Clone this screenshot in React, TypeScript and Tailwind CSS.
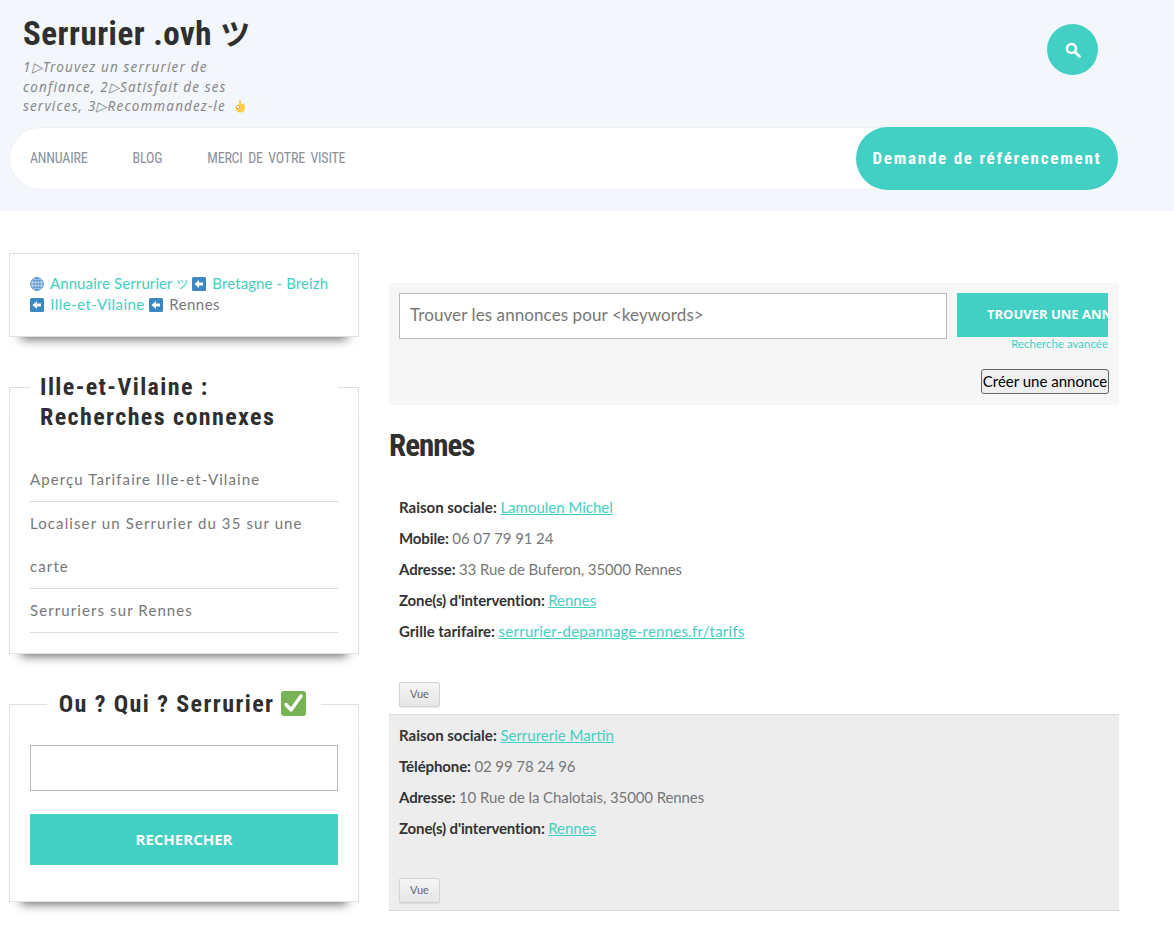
const body = "font-['Lato','Noto_Sans',sans-serif]";
const cond = "font-['Roboto',sans-serif] [font-stretch:75%]";

function ArrowBox() {
  return (
    <svg width="14" height="14" viewBox="0 0 14 14" className="inline-block align-[-2px]">
      <rect width="14" height="14" rx="1.5" fill="#3b88c3" />
      <path d="M2.5 7 L7 3 V5.5 H11 V8.5 H7 V11 Z" fill="#fff" />
    </svg>
  );
}
function Globe() {
  return (
    <svg width="14" height="14" viewBox="0 0 14 14" className="inline-block align-[-2px]" fill="none" stroke="#4a8cc7" strokeWidth="0.9">
      <circle cx="7" cy="7" r="6.4" fill="#cfe2f3" />
      <ellipse cx="7" cy="7" rx="3" ry="6.4" />
      <path d="M7 .6V13.4M.6 7H13.4M1.5 3.8H12.5M1.5 10.2H12.5" />
    </svg>
  );
}
function Check() {
  return (
    <svg width="25" height="25" viewBox="0 0 25 25" className="inline-block align-[-4px]">
      <rect width="25" height="25" rx="3" fill="#77b255" />
      <path d="M5 13.5 L10 19 L20 5" fill="none" stroke="#fff" strokeWidth="3.4" strokeLinecap="round" strokeLinejoin="round" />
    </svg>
  );
}
function OkHand() {
  return (
    <svg width="13" height="14" viewBox="0 0 13 14" className="inline-block align-[-2px]">
      <path d="M7 1c.7 0 1 .5 1 1v3l2-.5c1.200 0 1.800 1 1.800 2.500v2.500c0 2.500-1.800 4-4.300 4-2.800 0-5-1.800-5-4.500 0-1 .5-2 1.500-2.500L6 5V2c0-.5.400-1 1-1z" fill="#ffcc4d" />
      <circle cx="5" cy="8" r="1.700" fill="#fff" stroke="#f4a93c" strokeWidth="1" />
    </svg>
  );
}

function Card({ children, className = "" }: { children: React.ReactNode; className?: string }) {
  return (
    <section className={`border border-[#e0e0e0] bg-white shadow-[0_14px_10px_-12px_rgba(0,0,0,0.6)] ${className}`}>
      {children}
    </section>
  );
}

const Label = ({ children }: { children: React.ReactNode }) => (
  <span className="font-bold text-[#333]">{children}: </span>
);
const A = ({ children }: { children: React.ReactNode }) => (
  <a className="text-[#41d0c3] underline">{children}</a>
);

function Row({ children }: { children: React.ReactNode }) {
  return <p className="h-[31px] leading-[31px]">{children}</p>;
}

function VueBtn() {
  return (
    <button className="block w-[41px] h-[25px] rounded-[2px] border border-[#d4d4d4] bg-gradient-to-b from-[#f5f5f5] to-[#e6e6e6] text-[11px] text-[#666] shadow-[0_1px_1px_rgba(0,0,0,0.08)]">
      Vue
    </button>
  );
}

export default function App() {
  return (
    <div className={`${body} w-[1174px] h-[939px] overflow-hidden bg-white text-[15px] text-[#777]`}>
      <header className="h-[211px] bg-[#f3f6fb] pl-[9px] flex flex-col">
        <div className="h-[127px] flex shrink-0">
          <div className="pl-[14px] w-[250px]">
            <h1 className={`${cond} pt-[13px] h-[52px] leading-[38px] text-[33px] font-bold text-[#2f2f2f] tracking-[0.5px] whitespace-nowrap`}>
              Serrurier .ovh <span className="font-['Noto_Sans_CJK_JP'] font-bold text-[30px] tracking-normal">ツ</span>
            </h1>
            <p className="mt-[6px] text-[13.500px] leading-[19.500px] italic tracking-[1.150px] text-[#888] font-['Noto_Sans',sans-serif] whitespace-nowrap">
              1▷Trouvez un serrurier de
              <br />
              confiance, 2▷Satisfait de ses
              <br />
              services, 3▷Recommandez-le <span className="ml-[2px]"><OkHand /></span>
            </p>
          </div>
          <div className="ml-[788px] mt-[24px] w-[51px] h-[51px] rounded-full bg-[#41d0c3] flex items-center justify-center">
            <svg width="16" height="16" viewBox="0 0 16 16" fill="none" stroke="#fff" strokeWidth="2.600">
              <circle cx="6.500" cy="6.500" r="4.500" />
              <path d="M10 10l4.500 4.500" strokeLinecap="round" />
            </svg>
          </div>
        </div>
        <nav className="w-[1109px] h-[63px] rounded-full bg-white border border-[#eef0f3] flex items-center justify-between">
          <ul className={`${cond} flex pl-[20px] gap-[45px] text-[14px] tracking-[-0.200px] [word-spacing:2.500px] text-[#8a8f99] uppercase`}>
            <li>Annuaire</li>
            <li>Blog</li>
            <li>Merci de votre visite</li>
          </ul>
          <a className={`${cond} h-[63px] w-[262px] -mr-px rounded-full bg-[#41d0c3] text-white font-bold text-[17px] tracking-[1.750px] flex items-center justify-center`}>
            Demande de référencement
          </a>
        </nav>
      </header>

      <div className="flex pl-[9px] pt-[42px] gap-[30px] items-start">
        <aside className="w-[350px] flex flex-col gap-[50px]">
          <Card className="h-[84px] px-[20px] pt-[19px] leading-[21px] whitespace-nowrap">
            <div className="tracking-[0.100px]">
              <Globe /> <a className="ml-[2px] text-[#41d0c3]">Annuaire Serrurier <span className="font-['Noto_Sans_CJK_JP'] text-[12px]">ツ</span></a> <ArrowBox />{" "}
              <a className="ml-[2px] text-[#41d0c3]">Bretagne - Breizh</a>
            </div>
            <div className="tracking-[0.450px]">
              <ArrowBox /> <a className="ml-[2px] text-[#41d0c3]">Ille-et-Vilaine</a> <ArrowBox /> <span className="ml-[2px]">Rennes</span>
            </div>
          </Card>

          <Card className="h-[267px] px-[20px]">
            <h3 className={`${cond} -mt-[16px] bg-white px-[10px] text-[24px] leading-[30px] font-bold tracking-[1.400px] text-[#2f2f2f]`}>
              Ille-et-Vilaine :<br />Recherches connexes
            </h3>
            <ul className="mt-[26px] tracking-[1.100px] text-[#777]">
              <li className="h-[44px] leading-[42px] border-b border-[#ddd]">Aperçu Tarifaire Ille-et-Vilaine</li>
              <li className="h-[87px] leading-[43px] border-b border-[#ddd]">Localiser un Serrurier du 35 sur une<br />carte</li>
              <li className="h-[44px] leading-[42px] border-b border-[#ddd]">Serruriers sur Rennes</li>
            </ul>
          </Card>

          <Card className="h-[198px] px-[20px]">
            <h3 className={`${cond} -mt-[16px] mx-[17px] pr-[3px] bg-white text-center text-[24px] leading-[30px] font-bold tracking-[1.400px] text-[#2f2f2f] whitespace-nowrap`}>
              Ou ? Qui ? Serrurier <Check />
            </h3>
            <input className="block mt-[26px] w-[308px] h-[46px] border border-[#bbb] bg-white" />
            <button className="block mt-[23px] pb-[1px] w-[308px] h-[51px] bg-[#41d0c3] text-white font-bold text-[15px] font-['Open_Sans',sans-serif]">
              RECHERCHER
            </button>
          </Card>
        </aside>

        <main className="w-[730px] pt-[30px]">
          <div className="h-[122px] rounded-[4px] bg-[#f6f6f6] pl-[10px] pr-[10px] pt-[10px]">
            <div className="flex gap-[10px]">
              <div className="w-[548px] h-[46px] border border-[#bbb] bg-white pl-[10px] pb-[2px] flex items-center text-[17px] text-[#777] tracking-[0.090px]">
                {"Trouver les annonces pour <keywords>"}
              </div>
              <div className="w-[151px] flex flex-col items-end">
                <div className="w-full h-[44px] bg-[#41d0c3] overflow-hidden pl-[30px] flex items-center text-white font-bold text-[13px] whitespace-nowrap font-['Open_Sans',sans-serif]">
                  TROUVER UNE ANNONCE
                </div>
                <a className="text-[11.500px] leading-[14px] text-[#41d0c3] whitespace-nowrap">Recherche avancée</a>
              </div>
            </div>
            <div className="flex justify-end mt-[18px]">
              <button className="h-[25px] w-[128px] rounded-[3px] border border-[#666] bg-[#efefef] text-[15px] text-black whitespace-nowrap">
                Créer une annonce
              </button>
            </div>
          </div>

          <h1 className={`${cond} mt-[22px] text-[31px] tracking-[-1px] leading-[38px] font-bold text-[#2f2f2f]`}>Rennes</h1>

          <div className="mt-[27px] pl-[10px] h-[222px]">
            <Row><Label>Raison sociale</Label><A>Lamoulen Michel</A></Row>
            <Row><span className="tracking-[-0.100px]"><Label>Mobile</Label>06 07 79 91 24</span></Row>
            <Row><span className="tracking-[-0.100px]"><Label>Adresse</Label>33 Rue de Buferon, 35000 Rennes</span></Row>
            <Row><span className="tracking-[-0.150px]"><Label>Zone(s) d'intervention</Label></span><A>Rennes</A></Row>
            <Row><Label>Grille tarifaire</Label><a className="text-[#41d0c3] underline tracking-[0.250px]">serrurier-depannage-rennes.fr/tarifs</a></Row>
            <div className="mt-[35px]"><VueBtn /></div>
          </div>

          <div className="pl-[10px] h-[197px] bg-[#ededed] border-t border-b border-dotted border-[#ccc] pt-[5px]">
            <Row><Label>Raison sociale</Label><A>Serrurerie Martin</A></Row>
            <Row><span className="tracking-[-0.100px]"><Label>Téléphone</Label>02 99 78 24 96</span></Row>
            <Row><span className="tracking-[-0.100px]"><Label>Adresse</Label>10 Rue de la Chalotais, 35000 Rennes</span></Row>
            <Row><span className="tracking-[-0.150px]"><Label>Zone(s) d'intervention</Label></span><A>Rennes</A></Row>
            <div className="mt-[34px]"><VueBtn /></div>
          </div>
        </main>
      </div>
    </div>
  );
}
